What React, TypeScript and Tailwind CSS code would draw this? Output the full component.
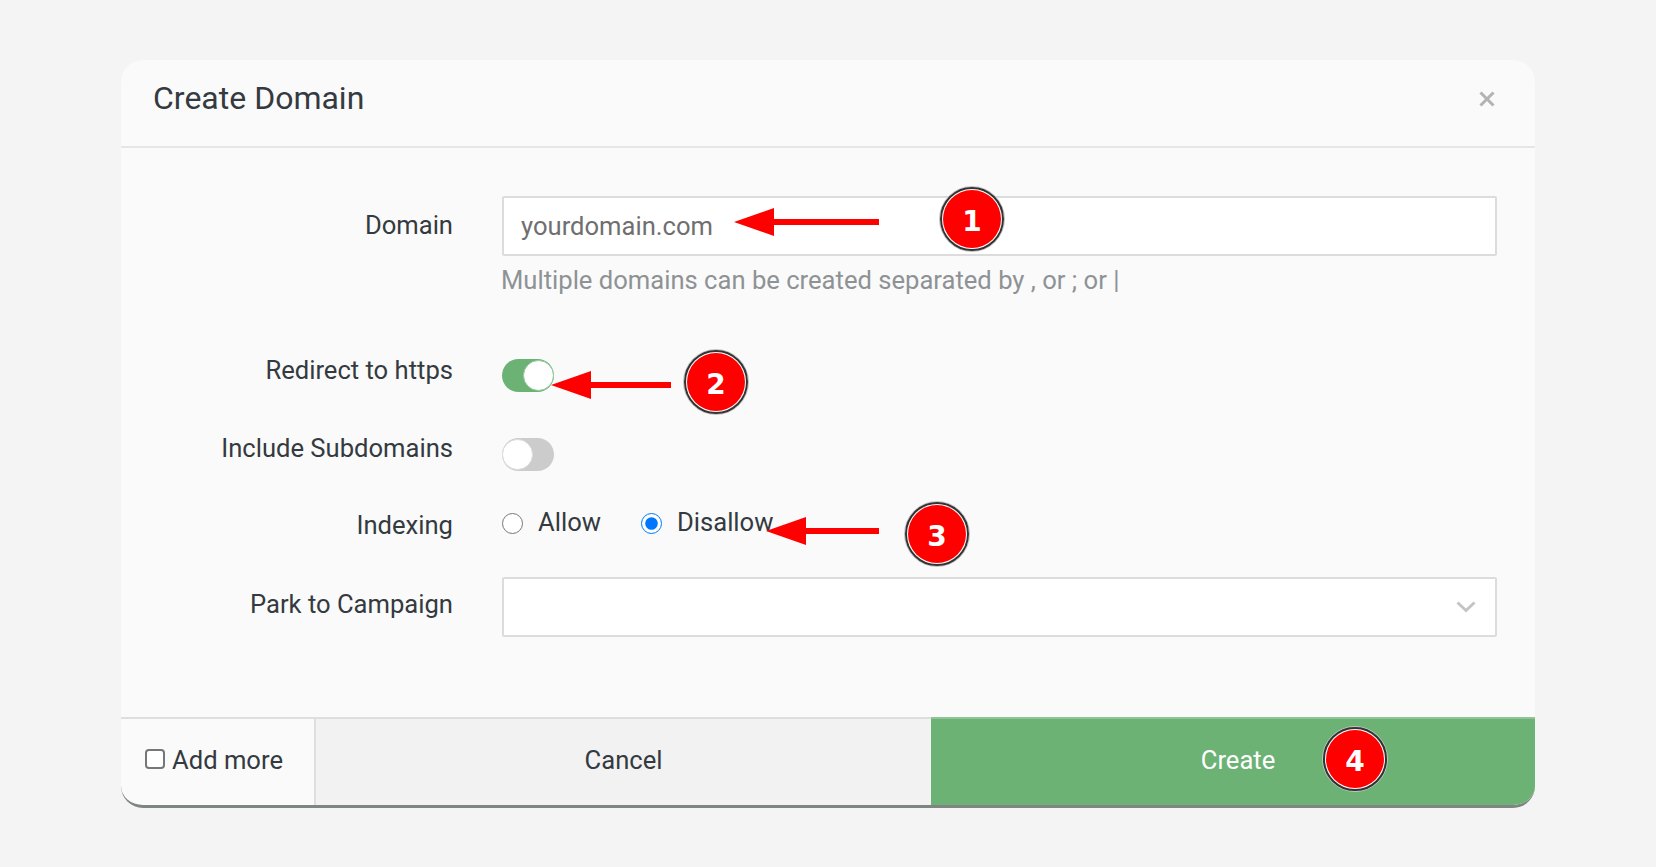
const font = "font-['Roboto',sans-serif]"

function Toggle({ on }: { on?: boolean }) {
  return (
    <div className={`flex h-[33px] w-[52px] items-center rounded-full ${on ? "justify-end bg-[#6cb274]" : "justify-start bg-[#cccccc]"}`}>
      <div className={`h-[31px] w-[31px] rounded-full bg-white ${on ? "border border-[#8fcb96]" : "border border-[#dddddd]"}`} />
    </div>
  )
}

function Row({ label, className, labelClass, children }: { label: string; className: string; labelClass?: string; children: React.ReactNode }) {
  return (
    <div className={`flex ${className}`}>
      <div className={`w-[332px] shrink-0 text-right text-[25.6px] leading-[32px] text-[#343a40] ${labelClass ?? ""}`}>{label}</div>
      <div className="ml-[49px] w-[995px]">{children}</div>
    </div>
  )
}

function Callout({ n, className }: { n: number; className: string }) {
  return (
    <div className={`absolute flex h-[66px] w-[66px] items-center justify-center rounded-full border-[1px] border-[#c4c4c4] ${className}`}>
      <div className="flex h-[64px] w-[64px] items-center justify-center rounded-full border-2 border-[#333333] bg-white">
        <div className="flex h-[58px] w-[58px] items-center justify-center rounded-full bg-[#ff0000] pt-[6px] font-['DejaVu_Sans',sans-serif] text-[28px] font-bold leading-none text-white">
          {n}
        </div>
      </div>
    </div>
  )
}

function Arrow({ className, width }: { className: string; width: number }) {
  return (
    <svg className={`absolute ${className}`} width={width} height={30} viewBox={`0 0 ${width} 30`}>
      <path d={`M0 15L40 1V12H${width}V18H40V29Z`} fill="#ff0000" />
    </svg>
  )
}

export default function App() {
  return (
    <div className={`relative h-[867px] w-[1656px] overflow-hidden bg-[#f4f4f4] pl-[121px] pt-[60px] ${font}`}>
      <div className="flex h-[748px] w-[1414px] flex-col overflow-hidden rounded-[22px] border-b-[3px] border-[#7f8583] bg-[#fafafa]">
        {/* header */}
        <div className="flex h-[88px] shrink-0 items-center justify-between border-b-2 border-[#e6e6e6] pl-[32px] pr-[40px]">
          <h1 className="pb-[10px] text-[32px] font-normal leading-[44px] text-[#343a40]">Create Domain</h1>
          <svg width="16" height="16" viewBox="0 0 16 16" className="mb-[9px]">
            <path d="M1.5 1.5L14.5 14.5M14.5 1.5L1.5 14.5" stroke="#b3b3b3" strokeWidth="3" />
          </svg>
        </div>

        {/* form */}
        <div className="flex-1 pt-[48px]">
          <Row label="Domain" className="items-start" labelClass="pt-[13px]">
            <input
              placeholder="yourdomain.com"
              className="h-[60px] w-full rounded-[2px] border-2 border-[#dcdcdc] bg-white px-[17px] text-[25.6px] placeholder:text-[#6f6f6f]"
            />
            <p className="-ml-[1px] pt-[8px] text-[25.6px] leading-[32px] text-[#8e9295]">Multiple domains can be created separated by , or ; or |</p>
          </Row>
          <Row label="Redirect to https" className="mt-[63px]" labelClass="-mt-[5px]">
            <Toggle on />
          </Row>
          <Row label="Include Subdomains" className="mt-[46px]" labelClass="-mt-[6px]">
            <Toggle />
          </Row>
          <Row label="Indexing" className="mt-[41px]" labelClass="-mt-[3px]">
            <div className="flex items-start text-[25.6px] leading-[32px] text-[#343a40]">
              <input type="radio" name="indexing" className="m-0 mt-[1px] h-[21px] w-[21px]" />
              <span className="ml-[15px] -mt-[6px]">Allow</span>
              <input type="radio" name="indexing" defaultChecked className="m-0 ml-[40px] mt-[1px] h-[21px] w-[21px]" />
              <span className="ml-[15px] -mt-[6px]">Disallow</span>
            </div>
          </Row>
          <Row label="Park to Campaign" className="mt-[36px]" labelClass="pt-[11px]">
            <div className="flex h-[60px] w-full items-center justify-end rounded-[2px] border-2 border-[#dcdcdc] bg-white pr-[19px]">
              <svg width="20" height="12" viewBox="0 0 20 12">
                <path d="M1.5 1.5L10 9.5L18.5 1.5" fill="none" stroke="#c4c4c4" strokeWidth="3" />
              </svg>
            </div>
          </Row>
        </div>

        {/* footer */}
        <div className="flex h-[88px] shrink-0 text-[25.6px]">
          <label className="flex w-[195px] shrink-0 items-center gap-[7px] border-r-2 border-t-2 border-[#dedede] pl-[24px] pb-[3px] text-[#343a40]">
            <input type="checkbox" className="m-0 mb-[3px] h-[20px] w-[20px] appearance-none rounded-[4px] border-2 border-[#767676] bg-white" />
            Add more
          </label>
          <button className="w-[615px] border-t-2 border-[#dedede] bg-[#f2f2f2] pb-[3px] text-[#343a40]">Cancel</button>
          <button className="flex-1 border-t-2 border-[#8fc497] bg-[#6cb274] pb-[3px] pl-[10px] text-white">Create</button>
        </div>
      </div>

      {/* annotations */}
      <Arrow className="left-[734px] top-[207px]" width={145} />
      <Arrow className="left-[551px] top-[370px]" width={120} />
      <Arrow className="left-[766px] top-[516px]" width={113} />
      <Callout n={1} className="left-[939px] top-[186px]" />
      <Callout n={2} className="left-[683px] top-[349px]" />
      <Callout n={3} className="left-[904px] top-[501px]" />
      <Callout n={4} className="left-[1322px] top-[726px]" />
    </div>
  )
}
